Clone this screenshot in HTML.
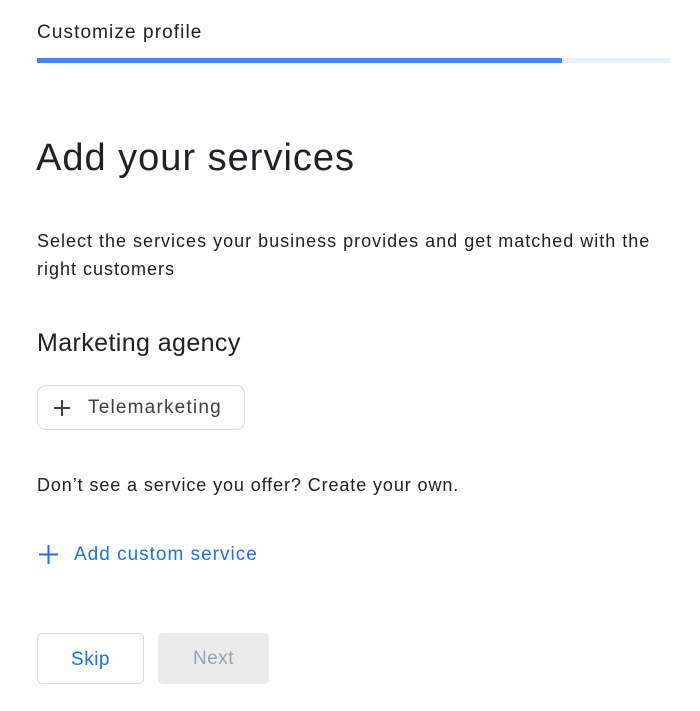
<!DOCTYPE html>
<html><head><meta charset="utf-8"><style>
body{margin:0;width:700px;height:711px;background:#fff;font-family:"Liberation Sans",sans-serif;color:#202124;position:relative;overflow:hidden}
.a{position:absolute;white-space:nowrap}
</style></head><body>
<div class="a" style="left:37px;top:22px;font-size:19px;letter-spacing:1.1px">Customize profile</div>
<div class="a" style="left:37px;top:58px;width:633px;height:5px;background:#e8f0fe"></div>
<div class="a" style="left:37px;top:58px;width:525px;height:5px;background:#4285f4"></div>
<div class="a" style="left:36px;top:137px;font-size:38px;letter-spacing:1px">Add your services</div>
<div class="a" style="left:37px;top:227px;font-size:18px;line-height:28px;letter-spacing:1px">Select the services your business provides and get matched with the<br>right customers</div>
<div class="a" style="left:37px;top:329px;font-size:25px;letter-spacing:0.4px">Marketing agency</div>
<div class="a" style="left:37px;top:385px;width:208px;height:45px;border:1px solid #dadce0;border-radius:9px;box-sizing:border-box"></div>
<svg class="a" style="left:52px;top:398px" width="20" height="20"><path d="M10 2V18M2 10H18" stroke="#3c4043" stroke-width="2"/></svg>
<div class="a" style="left:88px;top:397px;font-size:19px;color:#3c4043;letter-spacing:1.2px">Telemarketing</div>
<div class="a" style="left:37px;top:475px;font-size:18px;letter-spacing:0.9px">Don’t see a service you offer? Create your own.</div>
<svg class="a" style="left:38px;top:544px" width="21" height="21"><path d="M10.5 1V20M1 10.5H20" stroke="#1a73e8" stroke-width="2"/></svg>
<div class="a" style="left:74px;top:544px;font-size:19px;color:#1a73e8;letter-spacing:1px">Add custom service</div>
<div class="a" style="left:37px;top:633px;width:107px;height:51px;border:1px solid #dadce0;border-radius:5px;box-sizing:border-box;text-align:center;line-height:51px;font-size:19px;color:#1a73e8;letter-spacing:.5px">Skip</div>
<div class="a" style="left:158px;top:633px;width:111px;height:51px;background:#ebebeb;border-radius:5px;text-align:center;line-height:51px;font-size:19px;color:#9aa0a6;letter-spacing:.5px">Next</div>
</body></html>
